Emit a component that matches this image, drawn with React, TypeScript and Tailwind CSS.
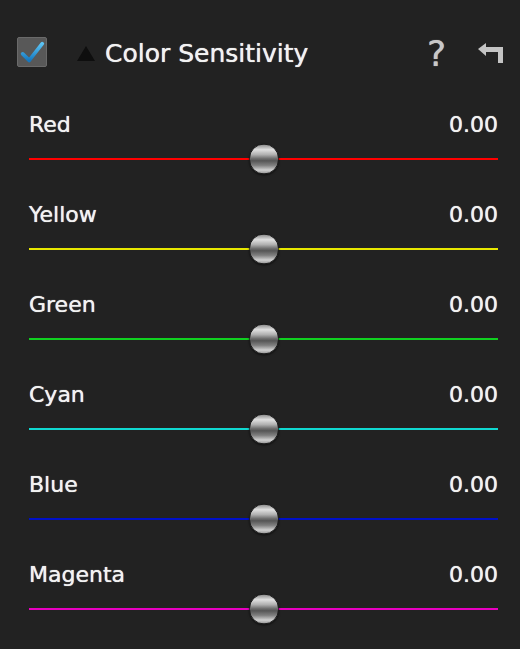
import React from 'react';

const CHANNELS = [
  { name: 'Red', value: '0.00', track: 'bg-[#ff0000]' },
  { name: 'Yellow', value: '0.00', track: 'bg-[#e8e800]' },
  { name: 'Green', value: '0.00', track: 'bg-[#10d020]' },
  { name: 'Cyan', value: '0.00', track: 'bg-[#10d8d0]' },
  { name: 'Blue', value: '0.00', track: 'bg-[#0010c8]' },
  { name: 'Magenta', value: '0.00', track: 'bg-[#e800c0]' },
];

function CheckBox() {
  return (
    <div className="w-[30px] h-[30px] bg-[#585858] border border-[#6a6a6a] rounded-[2px] flex items-center justify-center shrink-0">
      <svg width="30" height="30" viewBox="0 0 30 30">
        <defs>
          <linearGradient id="chk" x1="0" y1="0" x2="0" y2="1">
            <stop offset="0" stopColor="#5cc4f4" />
            <stop offset="1" stopColor="#1478c0" />
          </linearGradient>
        </defs>
        <path d="M5 17 L12 24 L26 6" fill="none" stroke="url(#chk)" strokeWidth="4" strokeLinecap="round" strokeLinejoin="round" />
      </svg>
    </div>
  );
}

function Knob() {
  return (
    <div className="absolute left-1/2 top-1/2 -translate-x-1/2 -translate-y-1/2 w-[30px] h-[31px] rounded-full border border-[#1a1a1a] bg-[linear-gradient(180deg,#8a8a8a_0%,#e0e0e0_18%,#b0b0b0_35%,#707070_48%,#555555_56%,#808080_72%,#d0d0d0_88%,#989898_100%)] shadow-[0_1px_2px_rgba(0,0,0,0.6)]" />
  );
}

export default function App() {
  return (
    <div className="w-full h-[649px] bg-[#222222] text-[#f2f2f2] font-['DejaVu_Sans',sans-serif] overflow-hidden">
      {/* header */}
      <div className="h-[112px] pt-[37px] pl-[17px] pr-[14px]">
        <div className="flex items-center h-[30px]">
          <CheckBox />
          <svg width="18" height="15" viewBox="0 0 18 15" className="ml-[30px] mt-[3px]">
            <polygon points="9,0 18,15 0,15" fill="#0e0e0e" />
          </svg>
          <span className="ml-[10px] text-[25px] leading-[30px] mt-[4px] [text-shadow:0_0_0.8px_#fff]">
            Color Sensitivity
          </span>
          <div className="ml-auto flex items-center gap-[30px]">
            <span className="text-[36px] leading-[30px] text-[#c8c8c8] mt-[3px] [text-shadow:0_0_0.8px_#ccc]">?</span>
            <svg width="30" height="22" viewBox="0 0 30 22" className="mt-[2px]">
              <path d="M2 7 L10 1 L10 5 L27 5 L27 21 L22 21 L22 10 L10 10 L10 14 Z" fill="#c4c4c4" />
            </svg>
          </div>
        </div>
      </div>

      {/* sliders */}
      <div className="pl-[29px] pr-[22px]">
        {CHANNELS.map((c) => (
          <div key={c.name} className="h-[90px]">
            <div className="flex justify-between items-center text-[22px] leading-[26px] [text-shadow:0_0_0.8px_#fff]">
              <span>{c.name}</span>
              <span>{c.value}</span>
            </div>
            <div className="relative h-[32px] mt-[5px] flex items-center">
              <div className={`w-full h-[2px] ${c.track}`} />
              <Knob />
            </div>
          </div>
        ))}
      </div>
    </div>
  );
}
